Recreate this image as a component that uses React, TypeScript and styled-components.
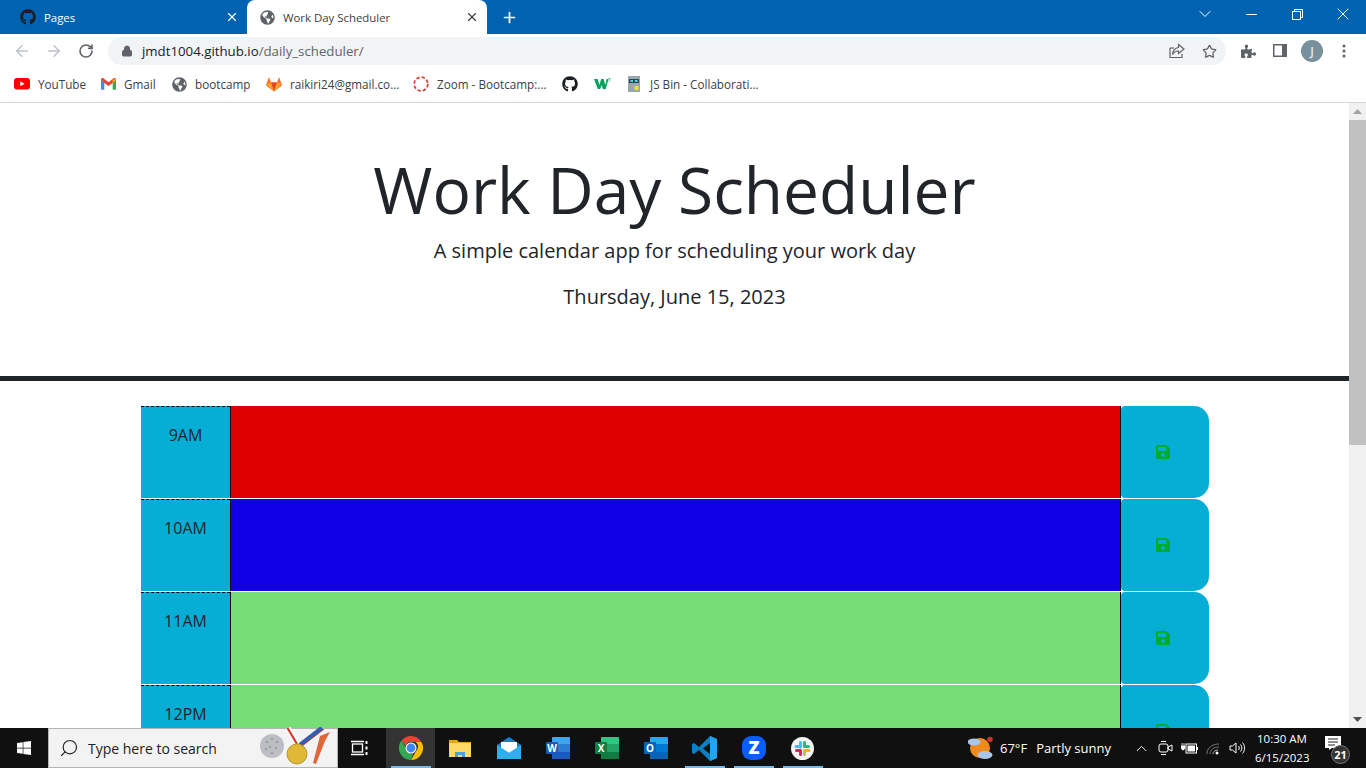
import React from "react";
import styled, { createGlobalStyle } from "styled-components";
import { FaSave, FaGithub, FaGlobeAmericas, FaPuzzlePiece, FaWindows } from "react-icons/fa";
import { ArrowLeft, ArrowRight, RotateCw, Lock, Star, X, Plus, ChevronDown, Minus, ChevronUp, Search } from "lucide-react";

const Global = createGlobalStyle`
  html, body { margin: 0; padding: 0; overflow: hidden; background: #fff; }
  * { box-sizing: border-box; }
  body { font-family: "Open Sans", "Liberation Sans", sans-serif; }
`;
const Screen = styled.div`
  width: 1366px; height: 768px; display: flex; flex-direction: column; overflow: hidden;
`;
const TabStrip = styled.div`
  height: 34px; flex: none; background: #0063b1; display: flex; align-items: flex-end; color: #fff;
`;
const Tab = styled.div<{ $active?: boolean; $w: number; $pad: number }>`
  width: ${p => p.$w}px; height: 34px; padding: 0 8px 0 ${p => p.$pad}px; display: flex; align-items: center; gap: 8px;
  font-size: 11.4px; position: relative;
  background: ${p => (p.$active ? "#fff" : "transparent")};
  color: ${p => (p.$active ? "#3c4043" : "#fff")};
  border-radius: 8px 8px 0 0;
`;
const TabTitle = styled.span`flex: 1; white-space: nowrap;`;
const NewTab = styled.div`width: 44px; display: flex; justify-content: center; align-items: center; height: 34px;`;
const WinControls = styled.div`margin-left: auto; display: flex; height: 28px; align-items: center; align-self: flex-start;`;
const WinBtn = styled.div`width: 46px; display: flex; justify-content: center; align-items: center;`;
const Toolbar = styled.div`
  height: 34px; flex: none; background: #fff; display: flex; align-items: center; padding: 0 0 0 6px;
`;
const NavBtn = styled.div<{ $off?: boolean }>`
  width: 32px; height: 28px; display: flex; justify-content: center; align-items: center;
  color: ${p => (p.$off ? "#bdc1c6" : "#5f6368")};
`;
const Omnibox = styled.div`
  width: 1118px; height: 28px; margin-left: 6px; background: #f1f3f4; border-radius: 14px; display: flex; align-items: center;
  padding: 0 9px 0 13px; gap: 9px; font-size: 13.25px; color: #202124;
`;
const Url = styled.span`flex: 1; white-space: nowrap; & > em { font-style: normal; color: #5f6368; }`;
const OmniIcons = styled.div`display: flex; gap: 17px; align-items: center; color: #5f6368;`;
const ToolIcons = styled.div`display: flex; align-items: center; margin-left: 6px; color: #5f6368;`;
const ToolIcon = styled.div`width: 32px; display: flex; justify-content: center; align-items: center;`;
const Avatar = styled.div`
  width: 22px; height: 22px; border-radius: 50%; background: #78909c; color: #e8eaed; font-size: 12px; font-weight: 600;
  display: flex; align-items: center; justify-content: center;
`;
const Bookmarks = styled.div`
  height: 35px; flex: none; background: #fff; border-bottom: 1px solid #d5d6d8; display: flex; align-items: center;
  padding: 0 0 2px 14px; gap: 16px; font-size: 11.7px; color: #3c4043;
`;
const Bookmark = styled.div<{ $w?: number; $gap?: number }>`
  display: flex; align-items: center; gap: ${p => p.$gap ?? 8}px; white-space: nowrap;
  & > span { display: block; width: ${p => (p.$w ? `${p.$w}px` : "auto")}; }
`;
const Viewport = styled.div`flex: 1; min-height: 0; display: flex; overflow: hidden;`;
const Page = styled.main`width: 1349px; flex: none; overflow: hidden;`;
const Jumbotron = styled.header`
  height: 278px; padding-top: 44px; text-align: center; color: #212529; border-bottom: 5px solid #212529;
`;
const Title = styled.h1`margin: 0 0 3px; font-size: 64px; font-weight: 400; line-height: 86px;`;
const Lead = styled.p`margin: 0 0 16px; font-size: 20px; font-weight: 400; line-height: 30px;`;
const DateLine = styled.p`margin: 0; font-size: 20px; font-weight: 400; line-height: 30px;`;
const Rows = styled.section`padding: 25px 0 0 141px; display: flex; flex-direction: column; gap: 1px; width: 1209px;`;
const Row = styled.div`display: grid; grid-template-columns: 89px 1px 889px 1px 88px; height: 92px;`;
const Hour = styled.div`
  background: #06aed5; border-top: 1px dashed #000; padding-top: 16px; text-align: center; font-size: 16px; line-height: 24px;
  color: #212529;
`;
const Rule = styled.div`background: #000;`;
const Slot = styled.div<{ $bg: string }>`background: ${p => p.$bg};`;
const SaveBtn = styled.div`
  background: #06aed5; border-radius: 4px 15px 15px 4px; display: flex; align-items: center; justify-content: center;
  color: #00ab2d; font-size: 16px; padding-right: 4px;
`;
const Scrollbar = styled.div`
  width: 17px; flex: none; background: #f1f1f1; display: flex; flex-direction: column; align-items: stretch; position: relative;
`;
const ScrollArrow = styled.div`height: 17px; display: flex; align-items: center; justify-content: center;`;
const Thumb = styled.div`height: 325px; background: #c1c1c1;`;
const ScrollSpacer = styled.div`flex: 1;`;
const Taskbar = styled.footer`
  height: 40px; flex: none; background: #101010; display: flex; align-items: stretch; color: #fff; position: relative;
`;
const StartBtn = styled.div`width: 48px; display: flex; align-items: center; justify-content: center;`;
const SearchBox = styled.div`
  width: 290px; background: #f3f3f3; border: 1px solid #b4b4b4; display: flex; align-items: center;
  padding: 0 8px 0 10px; gap: 9px; color: #222; font-size: 14px; position: relative; overflow: visible; white-space: nowrap;
`;
const TaskView = styled.div`width: 48px; padding-right: 4px; display: flex; align-items: center; justify-content: center;`;
const TaskItem = styled.div<{ $on?: boolean; $hot?: boolean }>`
  width: 49px; display: flex; align-items: center; justify-content: center; position: relative;
  background: ${p => (p.$hot ? "#333" : "transparent")};
  &::after {
    content: ""; position: absolute; bottom: 0; left: 5px; right: 4px; height: 2px;
    background: ${p => (p.$on ? "#76b9ed" : "transparent")};
  }
`;
const Tray = styled.div`margin-left: auto; display: flex; align-items: center; font-size: 13px; color: #fff;`;
const Weather = styled.div`display: flex; align-items: center; gap: 6px; width: 161px; white-space: nowrap;`;
const WeatherLabel = styled.span`margin-left: 3px;`;
const TrayIcons = styled.div`display: flex; align-items: center; width: 132px;`;
const TrayIcon = styled.div`width: 24px; display: flex; justify-content: center; align-items: center;`;
const Clock = styled.div`width: 54px; text-align: center; font-size: 11.5px; line-height: 19px; white-space: nowrap; margin-left: -6px;`;
const Notify = styled.div`
  width: 57px; padding-right: 10px; align-self: stretch; display: flex; justify-content: center; align-items: center; position: relative;
`;
const NotifyIconWrap = styled.div`margin-top: -10px; line-height: 0;`;
const NotifyBadge = styled.span`
  position: absolute; left: 22px; top: 17px; width: 19px; height: 19px; border-radius: 50%; background: #333; border: 1px solid #777;
  font-size: 11px; font-weight: 700; display: flex; align-items: center; justify-content: center; line-height: 1;
`;

const Globe = ({ size = 15, color = "#5f6368" }: { size?: number; color?: string }) => <FaGlobeAmericas size={size} color={color} />;

const YouTube = () => (
  <svg width="16" height="12" viewBox="0 0 16 12"><rect width="16" height="11.5" rx="3" fill="#f00" /><path d="M6.3 3.2v5l4.3-2.5z" fill="#fff" /></svg>
);
const Gmail = () => (
  <svg width="15" height="12" viewBox="0 0 15 12">
    <path d="M0 1.5v9.3c0 .6.5 1 1 1h2.3V5z" fill="#4285f4" />
    <path d="M15 1.5v9.3c0 .6-.5 1-1 1h-2.3V5z" fill="#34a853" />
    <path d="M0 1.6C0 .3 1.4-.4 2.4.3l5.1 3.9L12.6.3c1-.7 2.4 0 2.4 1.3L11.7 5 7.5 8.1 3.3 5z" fill="#ea4335" />
    <path d="M11.7 1.6 15 1.5 11.7 5z" fill="#fbbc04" />
  </svg>
);
const GitLab = () => (
  <svg width="16" height="16" viewBox="0 0 16 16">
    <path d="M8 15.5 .4 9.7.2 9C0 8.6.1 8.2.4 7.9L3 1l2 5.5h6L13 1l2.6 6.9c.3.3.4.7.2 1.1l-.2.7z" fill="#fc6d26" />
    <path d="M8 15.5 5 6.5h6z" fill="#e24329" />
    <path d="M8 15.5 .4 7.9 5 6.5zM8 15.5l7.6-7.6L11 6.5z" fill="#fca326" />
  </svg>
);
const ZoomRing = () => (
  <svg width="16" height="16" viewBox="0 0 16 16"><circle cx="8" cy="8" r="6.8" fill="none" stroke="#e0352b" strokeWidth="1.7" strokeDasharray="3.4 2" /></svg>
);
const W3 = () => (
  <svg width="17" height="12" viewBox="0 0 17 12"><path d="M0 1h3.6l1.800 6 1.700-6h2.500l1.700 6 1.400-6h1.800l-2.700 10H8.900L7.600 7 6.200 11H3.800z" fill="#04a25e" /><path d="M14.500 .5h2l-1 1.200c.9.3.6 1.800-1 1.600" fill="none" stroke="#04a25e" strokeWidth=".6" /></svg>
);
const JsBin = () => (
  <svg width="14" height="16" viewBox="0 0 14 16">
    <rect width="12" height="16" x="1" fill="#9aa7ad" /><rect x="2" y="3" width="10" height="4" fill="#2e4654" />
    <rect x="3.5" y="4" width="2.5" height="2" fill="#5ad1f5" /><rect x="8" y="4" width="2.5" height="2" fill="#5ad1f5" />
    <rect x="7.5" y="10" width="4" height="4" fill="#f5dc3c" />
  </svg>
);
const Share = () => (
  <svg width="16" height="16" viewBox="0 0 16 16" fill="none" stroke="#5f6368" strokeWidth="1.2">
    <path d="M1 5v9.5h12V11" /><path d="M1 5h4" /><path d="M9.5 1.5 15 6l-5.500 4.500V8C6.500 8 4.800 9 3.500 11.500 4 7.500 6 5 9.500 4.500z" />
  </svg>
);
const SidePanel = () => (
  <svg width="14" height="14" viewBox="0 0 14 14"><rect width="14" height="13" fill="#5f6368" /><rect x="1.500" y="1.500" width="7.500" height="10" fill="#fff" /></svg>
);
const Dots = () => (
  <svg width="4" height="14" viewBox="0 0 4 14" fill="#5f6368"><circle cx="2" cy="2" r="1.500" /><circle cx="2" cy="7" r="1.500" /><circle cx="2" cy="12" r="1.500" /></svg>
);
const Restore = () => (
  <svg width="11" height="11" viewBox="0 0 11 11" fill="none" stroke="#fff"><rect x=".5" y="2.500" width="8" height="8" /><path d="M2.500 2.500v-2h8v8h-2" /></svg>
);
const TaskViewIcon = () => (
  <svg width="18" height="16" viewBox="0 0 18 16" fill="none" stroke="#fff" strokeWidth="1.300">
    <rect x="1.500" y="4" width="10" height="8" /><path d="M0 1.500h13M0 14.500h13" /><path d="M15.500 1v3M15.500 6.500v3M15.500 12v3" strokeWidth="2" />
  </svg>
);
const Doodle = () => (
  <svg width="74" height="42" viewBox="0 0 74 42" style={{ position: "absolute", left: 210, top: -2 }}>
    <circle cx="13" cy="19" r="12" fill="#bcbec3" />
    <g fill="#8f9196"><circle cx="8" cy="15" r="1.100" /><circle cx="13" cy="12" r="1.100" /><circle cx="18" cy="15" r="1.100" /><circle cx="11" cy="20" r="1.100" /><circle cx="17" cy="21" r="1.100" /><circle cx="7" cy="22" r="1.100" /><circle cx="13" cy="26" r="1.100" /></g>
    <path d="M29 1 39 18" stroke="#fff" strokeWidth="5" /><path d="M28.500 1 38 17" stroke="#cf3a2c" strokeWidth="2.200" />
    <path d="M63 1 41 18" stroke="#2f5fb0" strokeWidth="4.500" /><path d="M63 1 41 18" stroke="#cf3a2c" strokeWidth="1" transform="translate(2 1)" />
    <circle cx="38" cy="27" r="10" fill="#dfb935" stroke="#b9962a" />
    <path d="M61 9 71 5 66 14 57 37 54 36z" fill="#e0673a" />
  </svg>
);
const Chrome = () => (
  <svg width="24" height="24" viewBox="0 0 24 24">
    <path d="M12 0a12 12 0 0 1 10.400 6H12a6 6 0 0 0-5.600 3.800L2.800 4.200A12 12 0 0 1 12 0z" fill="#ea4335" />
    <path d="M22.400 6A12 12 0 0 1 12 24l5.200-9a6 6 0 0 0-.4-9z" fill="#fbbc04" />
    <path d="M12 24A12 12 0 0 1 2.800 4.200l5 9.800a6 6 0 0 0 6.400 3.700z" fill="#34a853" />
    <circle cx="12" cy="12" r="5.500" fill="#fff" /><circle cx="12" cy="12" r="4.400" fill="#4285f4" />
  </svg>
);
const Explorer = () => (
  <svg width="22" height="18" viewBox="0 0 22 18">
    <path d="M0 1h8l2 2h12v4H0z" fill="#e8a326" /><rect y="4" width="22" height="14" fill="#ffd966" />
    <path d="M6 18v-5h10v5h-3v-2H9v2z" fill="#4aa3df" />
  </svg>
);
const Mail = () => (
  <svg width="24" height="22" viewBox="0 0 24 22">
    <path d="M12 0 24 8v14H0V8z" fill="#1a7fc9" /><path d="M4 5h16v6l-8 5-8-5z" fill="#fff" /><path d="M0 8l12 8 12-8v14H0z" fill="#2fb0ee" />
  </svg>
);
const Office = ({ c1, c2, c3, letter }: { c1: string; c2: string; c3: string; letter: string }) => (
  <svg width="24" height="22" viewBox="0 0 24 22">
    <rect x="6" width="18" height="22" rx="1" fill={c1} /><rect x="6" y="7" width="18" height="8" fill={c2} /><rect x="6" y="15" width="18" height="7" fill={c3} />
    <rect y="5" width="12" height="12" rx="1" fill={c3} />
    <text x="6" y="14.500" textAnchor="middle" fontSize="10" fontWeight="700" fill="#fff" fontFamily="Open Sans">{letter}</text>
  </svg>
);
const VSCode = () => (
  <svg width="25" height="25" viewBox="0 0 25 25">
    <path d="M18 0 7 11 2 7 0 8v9l2 1 5-4 11 11 7-3V3zm0 7v11l-7-5.500z" fill="#0e7fc4" />
    <path d="M18 0l7 3v19l-7 3z" fill="#22a5ea" />
  </svg>
);
const ZoomApp = () => (
  <svg width="24" height="24" viewBox="0 0 24 24"><rect width="24" height="24" rx="9" fill="#0b5cff" /><text x="12" y="18" textAnchor="middle" fontSize="18" fontWeight="800" fill="#fff" fontFamily="Open Sans">Z</text></svg>
);
const Slack = () => (
  <svg width="23" height="23" viewBox="0 0 23 23">
    <circle cx="11.500" cy="11.500" r="11.500" fill="#f3f3f3" />
    <g strokeWidth="3" strokeLinecap="round">
      <path d="M9.500 5.500v4.500M5 9.500h3" stroke="#36c5f0" /><path d="M17.500 9.500H13.500M13.500 5.500v4" stroke="#2eb67d" />
      <path d="M13.500 17.500V13.500M18 13.500h-3" stroke="#ecb22e" /><path d="M5.500 13.500h4M9.500 13.500v4" stroke="#e01e5a" />
    </g>
  </svg>
);
const WeatherIcon = () => (
  <svg width="26" height="24" viewBox="0 0 26 24">
    <circle cx="12" cy="12" r="10" fill="#f08a1d" /><circle cx="22" cy="3.500" r="2.800" fill="#c8322a" />
    <ellipse cx="6" cy="6" rx="6.500" ry="3.500" fill="#a9c6e8" /><ellipse cx="17" cy="19" rx="7.500" ry="4" fill="#a9c6e8" />
  </svg>
);
const Meet = () => (
  <svg width="15" height="16" viewBox="0 0 15 16" fill="none" stroke="#fff"><rect x="1" y="4" width="9" height="8" rx="2" /><path d="M10 7l4-2v6l-4-2zM3 1.500h5M3 14.500h5" /></svg>
);
const Battery = () => (
  <svg width="17" height="11" viewBox="0 0 17 11"><rect x="5" y="1" width="10.500" height="9" fill="none" stroke="#fff" /><rect x="6.500" y="2.500" width="7.500" height="6" fill="#fff" /><rect x="16" y="4" width="1" height="3" fill="#fff" /><path d="M0 3h4v2L2.500 7H1.500L0 5zM1 0v3M3 0v3" stroke="#fff" fill="#fff" strokeWidth=".8" /></svg>
);
const Wifi = () => (
  <svg width="14" height="14" viewBox="0 0 14 14" fill="none" stroke="#777" strokeWidth="1"><path d="M1 13C1 7 6 3 13 3M4 13c0-4 4-7 9-7" /><path d="M7 13c0-2 2-4 5-4" stroke="#bbb" /><circle cx="11" cy="12" r="1.500" fill="#fff" stroke="none" /></svg>
);
const Volume = () => (
  <svg width="17" height="14" viewBox="0 0 17 14" fill="none" stroke="#fff"><path d="M1 5v4h2.500L7 12V2L3.500 5z" /><path d="M9.500 5c1 1.200 1 2.800 0 4M11.500 3.500c1.800 2 1.800 5 0 7M13.500 1.500c2.800 3.200 2.800 8 0 11" /></svg>
);
const NotifyIcon = () => (
  <svg width="16" height="14" viewBox="0 0 16 14"><path d="M0 0h16v12H7l-3 2v-2H0z" fill="#fff" /><path d="M3 3h10M3 6h10M3 9h7" stroke="#222" /></svg>
);

const rows = [
  { hour: "9AM", color: "#de0000" },
  { hour: "10AM", color: "#1000e6" },
  { hour: "11AM", color: "#77dd77" },
  { hour: "12PM", color: "#77dd77" },
];

export default function App() {
  return (
    <Screen>
      <Global />
      <TabStrip>
        <Tab $w={247} $pad={20}>
          <FaGithub size={16} color="#1b1f23" />
          <TabTitle>Pages</TabTitle>
          <X size={14} strokeWidth={2} />
        </Tab>
        <Tab $active $w={240} $pad={13}>
          <Globe />
          <TabTitle>Work Day Scheduler</TabTitle>
          <X size={14} strokeWidth={2} color="#3c4043" />
        </Tab>
        <NewTab><Plus size={17} strokeWidth={2.4} /></NewTab>
        <WinControls>
          <WinBtn><ChevronDown size={20} strokeWidth={1} absoluteStrokeWidth /></WinBtn>
          <WinBtn><Minus size={17} strokeWidth={1} absoluteStrokeWidth /></WinBtn>
          <WinBtn><Restore /></WinBtn>
          <WinBtn><X size={20} strokeWidth={1} absoluteStrokeWidth /></WinBtn>
        </WinControls>
      </TabStrip>
      <Toolbar>
        <NavBtn $off><ArrowLeft size={18} /></NavBtn>
        <NavBtn $off><ArrowRight size={18} /></NavBtn>
        <NavBtn><RotateCw size={16} strokeWidth={2.4} /></NavBtn>
        <Omnibox>
          <Lock size={12} fill="#5f6368" color="#5f6368" />
          <Url>jmdt1004.github.io<em>/daily_scheduler/</em></Url>
          <OmniIcons>
            <Share />
            <Star size={15} strokeWidth={2} />
          </OmniIcons>
        </Omnibox>
        <ToolIcons>
          <ToolIcon><FaPuzzlePiece size={15} /></ToolIcon>
          <ToolIcon><SidePanel /></ToolIcon>
          <ToolIcon><Avatar>J</Avatar></ToolIcon>
          <ToolIcon><Dots /></ToolIcon>
        </ToolIcons>
      </Toolbar>
      <Bookmarks>
        <Bookmark $w={47}><YouTube /><span>YouTube</span></Bookmark>
        <Bookmark $w={32}><Gmail /><span>Gmail</span></Bookmark>
        <Bookmark $w={55}><Globe /><span>bootcamp</span></Bookmark>
        <Bookmark $w={107}><GitLab /><span>raikiri24@gmail.co...</span></Bookmark>
        <Bookmark $w={109}><ZoomRing /><span>Zoom - Bootcamp:...</span></Bookmark>
        <Bookmark><FaGithub size={16} color="#1b1f23" /></Bookmark>
        <Bookmark><W3 /></Bookmark>
        <Bookmark $gap={9}><JsBin /><span>JS Bin - Collaborati...</span></Bookmark>
      </Bookmarks>
      <Viewport>
        <Page>
          <Jumbotron>
            <Title>Work Day Scheduler</Title>
            <Lead>A simple calendar app for scheduling your work day</Lead>
            <DateLine>Thursday, June 15, 2023</DateLine>
          </Jumbotron>
          <Rows>
            {rows.map(r => (
              <Row key={r.hour}>
                <Hour>{r.hour}</Hour>
                <Rule />
                <Slot $bg={r.color} />
                <Rule />
                <SaveBtn><FaSave /></SaveBtn>
              </Row>
            ))}
          </Rows>
        </Page>
        <Scrollbar>
          <ScrollArrow><svg width="9" height="5" viewBox="0 0 9 5"><path d="M4.500 0 9 5H0z" fill="#a3a3a3" /></svg></ScrollArrow>
          <Thumb />
          <ScrollSpacer />
          <ScrollArrow><svg width="9" height="5" viewBox="0 0 9 5"><path d="M4.500 5 9 0H0z" fill="#505050" /></svg></ScrollArrow>
        </Scrollbar>
      </Viewport>
      <Taskbar>
        <StartBtn><FaWindows size={16} color="#fff" /></StartBtn>
        <SearchBox>
          <Search size={20} strokeWidth={1.4} style={{ transform: "scaleX(-1)" }} />
          <span>Type here to search</span>
          <Doodle />
        </SearchBox>
        <TaskView><TaskViewIcon /></TaskView>
        <TaskItem $on $hot><Chrome /></TaskItem>
        <TaskItem><Explorer /></TaskItem>
        <TaskItem><Mail /></TaskItem>
        <TaskItem><Office c1="#41a5ee" c2="#2b7cd3" c3="#185abd" letter="W" /></TaskItem>
        <TaskItem><Office c1="#33c481" c2="#21a366" c3="#107c41" letter="X" /></TaskItem>
        <TaskItem><Office c1="#28a8ea" c2="#0078d4" c3="#0364b8" letter="O" /></TaskItem>
        <TaskItem $on><VSCode /></TaskItem>
        <TaskItem $on><ZoomApp /></TaskItem>
        <TaskItem $on><Slack /></TaskItem>
        <Tray>
          <Weather>
            <WeatherIcon />
            <span>67°F</span>
            <WeatherLabel>Partly sunny</WeatherLabel>
          </Weather>
          <TrayIcons>
            <TrayIcon><ChevronUp size={17} strokeWidth={1.3} /></TrayIcon>
            <TrayIcon><Meet /></TrayIcon>
            <TrayIcon><Battery /></TrayIcon>
            <TrayIcon><Wifi /></TrayIcon>
            <TrayIcon><Volume /></TrayIcon>
          </TrayIcons>
          <Clock>10:30 AM<br />6/15/2023</Clock>
          <Notify><NotifyIconWrap><NotifyIcon /></NotifyIconWrap><NotifyBadge>21</NotifyBadge></Notify>
        </Tray>
      </Taskbar>
    </Screen>
  );
}
